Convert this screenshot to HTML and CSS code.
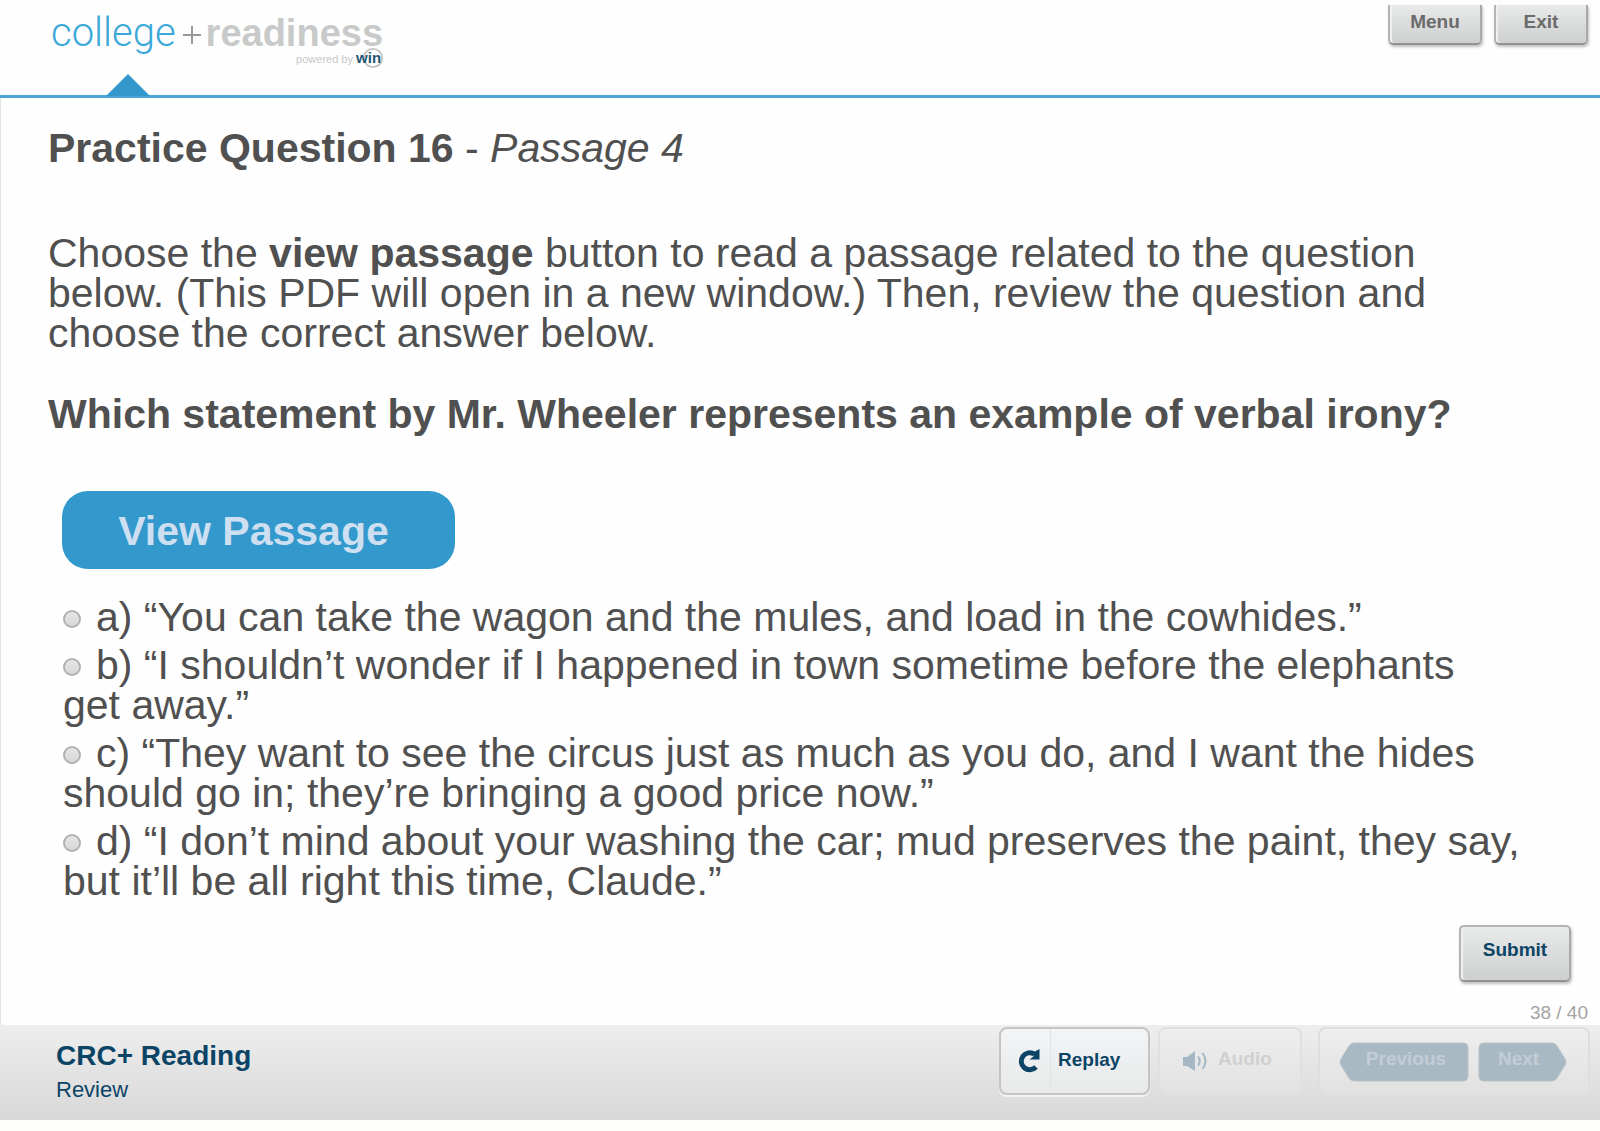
FILE: index.html
```html
<!DOCTYPE html>
<html lang="en">
<head>
    <meta charset="UTF-8">
    <meta name="viewport" content="width=device-width, initial-scale=1.0">
    <title>CRC+ Reading - Review</title>
    <link rel="stylesheet" href="styles.css">
</head>
<body>

<!-- Header -->
<header class="header">
    <div class="logo">
        <div class="logo-name"><span class="logo-college">college</span><svg class="logo-plus" viewBox="0 0 20 20"><path d="M10 1v18M1 10h18"/></svg><span class="logo-readiness">readiness</span></div>
        <div class="logo-powered">powered by <span class="logo-win">win<svg class="logo-ring" viewBox="0 0 24 24"><circle cx="12" cy="12" r="10"/></svg></span></div>
    </div>
    <div class="top-buttons">
        <button type="button" class="btn top-btn">Menu</button>
        <button type="button" class="btn top-btn">Exit</button>
    </div>
    <svg class="marker" viewBox="0 0 44 22"><path d="M22 0L44 22H0z"/></svg>
</header>

<!-- Question -->
<main class="content">
    <form class="question">
        <h1>Practice Question 16 <span>- <em>Passage 4</em></span></h1>
        <p>Choose the <b>view passage</b> button to read a passage related to the question below. (This PDF will open in a new window.) Then, review the question and choose the correct answer below.</p>
        <h2>Which statement by Mr. Wheeler represents an example of verbal irony?</h2>

        <button type="button" class="view-btn">View Passage</button>

        <div class="options">
            <label><input type="radio" name="answer" value="a">a) “You can take the wagon and the mules, and load in the cowhides.”</label>
            <label><input type="radio" name="answer" value="b">b) “I shouldn’t wonder if I happened in town sometime before the elephants get&nbsp;away.”</label>
            <label><input type="radio" name="answer" value="c">c) “They want to see the circus just as much as you do, and I want the hides should go in; they’re bringing a good price now.”</label>
            <label><input type="radio" name="answer" value="d">d) “I don’t mind about your washing the car; mud preserves the paint, they say, but it’ll be all right this time, Claude.”</label>
        </div>

        <button type="submit" class="btn submit-btn">Submit</button>
    </form>
    <div class="counter">38 / 40</div>
</main>

<!-- Footer -->
<footer class="footer">
    <div class="course">
        <div class="course-name">CRC+ Reading</div>
        <div class="course-part">Review</div>
    </div>
    <div class="controls">
        <button type="button" class="control replay">
            <span class="control-icon">
                <svg width="24" height="26" viewBox="0 0 24 26"><path class="arc" d="M17.500 6.200A8.500 8.500 0 1 0 19 19"/><path class="head" d="M22.500 1V11.500H12.500L17 8V4z"/></svg>
            </span>
            Replay
        </button>
        <button type="button" class="control audio" disabled>
            <span class="control-icon">
                <svg width="28" height="20" viewBox="0 0 28 20"><path class="head" d="M1 6h4l8-6v20l-8-5H1z"/><path class="wave" d="M16 5.500q3.500 4.500 0 9M20.500 2q6 8 0 16"/></svg>
            </span>
            Audio
        </button>
        <div class="pager">
            <button type="button" class="page-btn previous" disabled>
                <svg viewBox="0 0 130 40" preserveAspectRatio="none"><path d="M15 1H124Q129 1 129 6V34Q129 39 124 39H15Q12 39 10 36L2 23Q0 20 2 17L10 4Q12 1 15 1z"/></svg>
                <span>Previous</span>
            </button>
            <button type="button" class="page-btn next" disabled>
                <svg viewBox="0 0 89 40" preserveAspectRatio="none"><path d="M74 1H6Q1 1 1 6V34Q1 39 6 39H74Q77 39 79 36L87 23Q89 20 87 17L79 4Q77 1 74 1z"/></svg>
                <span>Next</span>
            </button>
        </div>
    </div>
</footer>

</body>
</html>
```
FILE: styles.css
```css
* {
    box-sizing: border-box;
}
body {
    font-family: "Liberation Sans", Arial, sans-serif;
    margin: 0;
    padding: 5px 0 11px;
    min-height: 100vh;
    display: flex;
    flex-direction: column;
    background-color: #fdfdfc;
    color: #505050;
}
button {
    font-family: inherit;
    font-weight: bold;
    cursor: pointer;
}
button:disabled {
    cursor: default;
}

/* Header */
.header {
    position: relative;
    display: flex;
    justify-content: space-between;
    align-items: flex-start;
    height: 93px;
    padding: 0 12px 0 51px;
    border-bottom: 3px solid #4aa5d6;
    background-color: #fefefe;
}
.logo {
    padding-top: 6px;
}
.logo-name {
    display: flex;
    align-items: center;
    line-height: 44px;
}
.logo-college {
    font-family: Roboto, "Liberation Sans", sans-serif;
    font-size: 40px;
    font-weight: 300;
    color: #3aa8d8;
}
.logo-plus {
    width: 20px;
    height: 20px;
    margin: 4px 4px 0 6px;
    fill: none;
    stroke: #999;
    stroke-width: 2;
}
.logo-readiness {
    font-size: 38px;
    font-weight: bold;
    color: #c8caca;
}
.logo-powered {
    position: relative;
    z-index: 0;
    margin-top: -6px;
    padding-right: 2px;
    text-align: right;
    font-size: 11px;
    line-height: 18px;
    color: #c8c8c8;
}
.logo-win {
    position: relative;
    font-size: 15px;
    font-weight: bold;
    color: #1d5575;
}
.logo-ring {
    position: absolute;
    z-index: -1;
    right: -3px;
    top: -2px;
    width: 22px;
    height: 22px;
    fill: none;
    stroke: #c4c4c4;
    stroke-width: 2;
}
.marker {
    position: absolute;
    left: 106px;
    bottom: -1px;
    width: 44px;
    height: 22px;
    fill: #3399cc;
}

/* Grey buttons */
.btn {
    border: 2px solid #a9a9a9;
    border-color: #b4b4b4 #a9a9a9 #929292 #b4b4b4;
    border-radius: 5px;
    background: linear-gradient(#e9eaea, #cdcecf);
    box-shadow: inset 2px 0 1px #f0f0f0, 1px 2px 3px rgba(0, 0, 0, 0.25);
    font-size: 19px;
}
.top-buttons {
    display: flex;
    gap: 12px;
}
.top-btn {
    width: 94px;
    height: 40px;
    padding: 0 0 4px;
    border-top: none;
    border-radius: 0 0 5px 5px;
    color: #6b6b6b;
}
.submit-btn {
    align-self: flex-end;
    width: 112px;
    height: 57px;
    padding: 0 0 7px;
    color: #0c4466;
}

/* Question */
.content {
    flex: 1;
    display: flex;
    flex-direction: column;
    justify-content: space-between;
    padding: 30px 12px 0 47px;
    border-left: 1px solid #e4e4e4;
    background-color: #fefefe;
}
.question {
    display: flex;
    flex-direction: column;
    padding-right: 17px;
    font-size: 41px;
    line-height: 40px;
}
h1, h2, p {
    margin: 0;
    font-size: 41px;
    line-height: 40px;
}
h1 span {
    font-weight: normal;
}
p {
    margin: 65px 100px 41px 0;
}
.view-btn {
    align-self: flex-start;
    width: 393px;
    height: 78px;
    margin: 57px 0 28px 14px;
    padding: 2px 10px 0 0;
    border: none;
    border-radius: 26px;
    background-color: #3399cc;
    color: #cddff0;
    font-size: 41px;
}
.options {
    display: flex;
    flex-direction: column;
    gap: 8px;
    padding-left: 15px;
    margin-bottom: 24px;
}
input[type="radio"] {
    appearance: none;
    width: 18px;
    height: 18px;
    margin: 0 15px 3px 0;
    border: 2px solid #b0b0b0;
    border-radius: 50%;
    background: linear-gradient(#e6e6e6, #d8d8d8);
}
input[type="radio"]:checked {
    background: #0c4466;
}
.counter {
    text-align: right;
    font-size: 19px;
    line-height: 24px;
    color: #a3a3a3;
}

/* Footer */
.footer {
    display: flex;
    justify-content: space-between;
    align-items: flex-start;
    height: 95px;
    padding: 2px 10px 0 56px;
    background: linear-gradient(#eeeeee, #d8d8d8);
    color: #0c4466;
}
.course {
    padding-top: 12px;
}
.course-name {
    font-size: 28px;
    font-weight: bold;
    line-height: 34px;
}
.course-part {
    font-size: 22px;
    line-height: 34px;
}
.controls {
    display: flex;
    gap: 8px;
}
.control {
    display: flex;
    align-items: center;
    height: 68px;
    padding: 0 0 5px;
    border: 2px solid #c4c4c4;
    border-radius: 8px;
    background: linear-gradient(#f2f4f6, #e8e9e9);
    box-shadow: 0 2px 1px #f4f4f4;
    color: #0c4466;
    font-size: 19px;
}
.control-icon {
    display: flex;
    align-items: center;
    padding-top: 5px;
}
.head {
    fill: #0c4466;
}
.arc, .wave {
    fill: none;
    stroke: #0c4466;
    stroke-width: 5;
}
.replay {
    width: 151px;
    padding: 0 0 3px 16px;
    gap: 7px;
}
.replay .control-icon {
    align-self: stretch;
    width: 34px;
    padding-top: 3px;
    border-right: 1px solid #e0e2e3;
}
.audio {
    width: 144px;
    padding-left: 22px;
    gap: 8px;
    border-color: #e0e0e0;
    background: linear-gradient(#eeeeee, #e2e2e2);
    box-shadow: none;
    color: #d0d0d0;
}
.audio .head {
    fill: #a5b7c3;
}
.wave {
    stroke: #a5b7c3;
    stroke-width: 2;
}
.pager {
    display: flex;
    gap: 9px;
    width: 272px;
    height: 70px;
    margin-left: 8px;
    padding: 13px 0 0 19px;
    border: 2px solid #dedede;
    border-radius: 8px;
    background: linear-gradient(#eeeeee, #e1e1e1);
}
.page-btn {
    position: relative;
    height: 40px;
    padding: 0 0 6px;
    border: none;
    background: none;
    color: #c2ced6;
    font-size: 19px;
}
.page-btn svg {
    position: absolute;
    left: 0;
    top: 0;
    width: 100%;
    height: 100%;
    fill: #a9b9c4;
    stroke: #b9bfc3;
}
.page-btn span {
    position: relative;
}
.previous {
    width: 130px;
    padding-left: 4px;
}
.next {
    width: 89px;
    padding-right: 8px;
}
```
